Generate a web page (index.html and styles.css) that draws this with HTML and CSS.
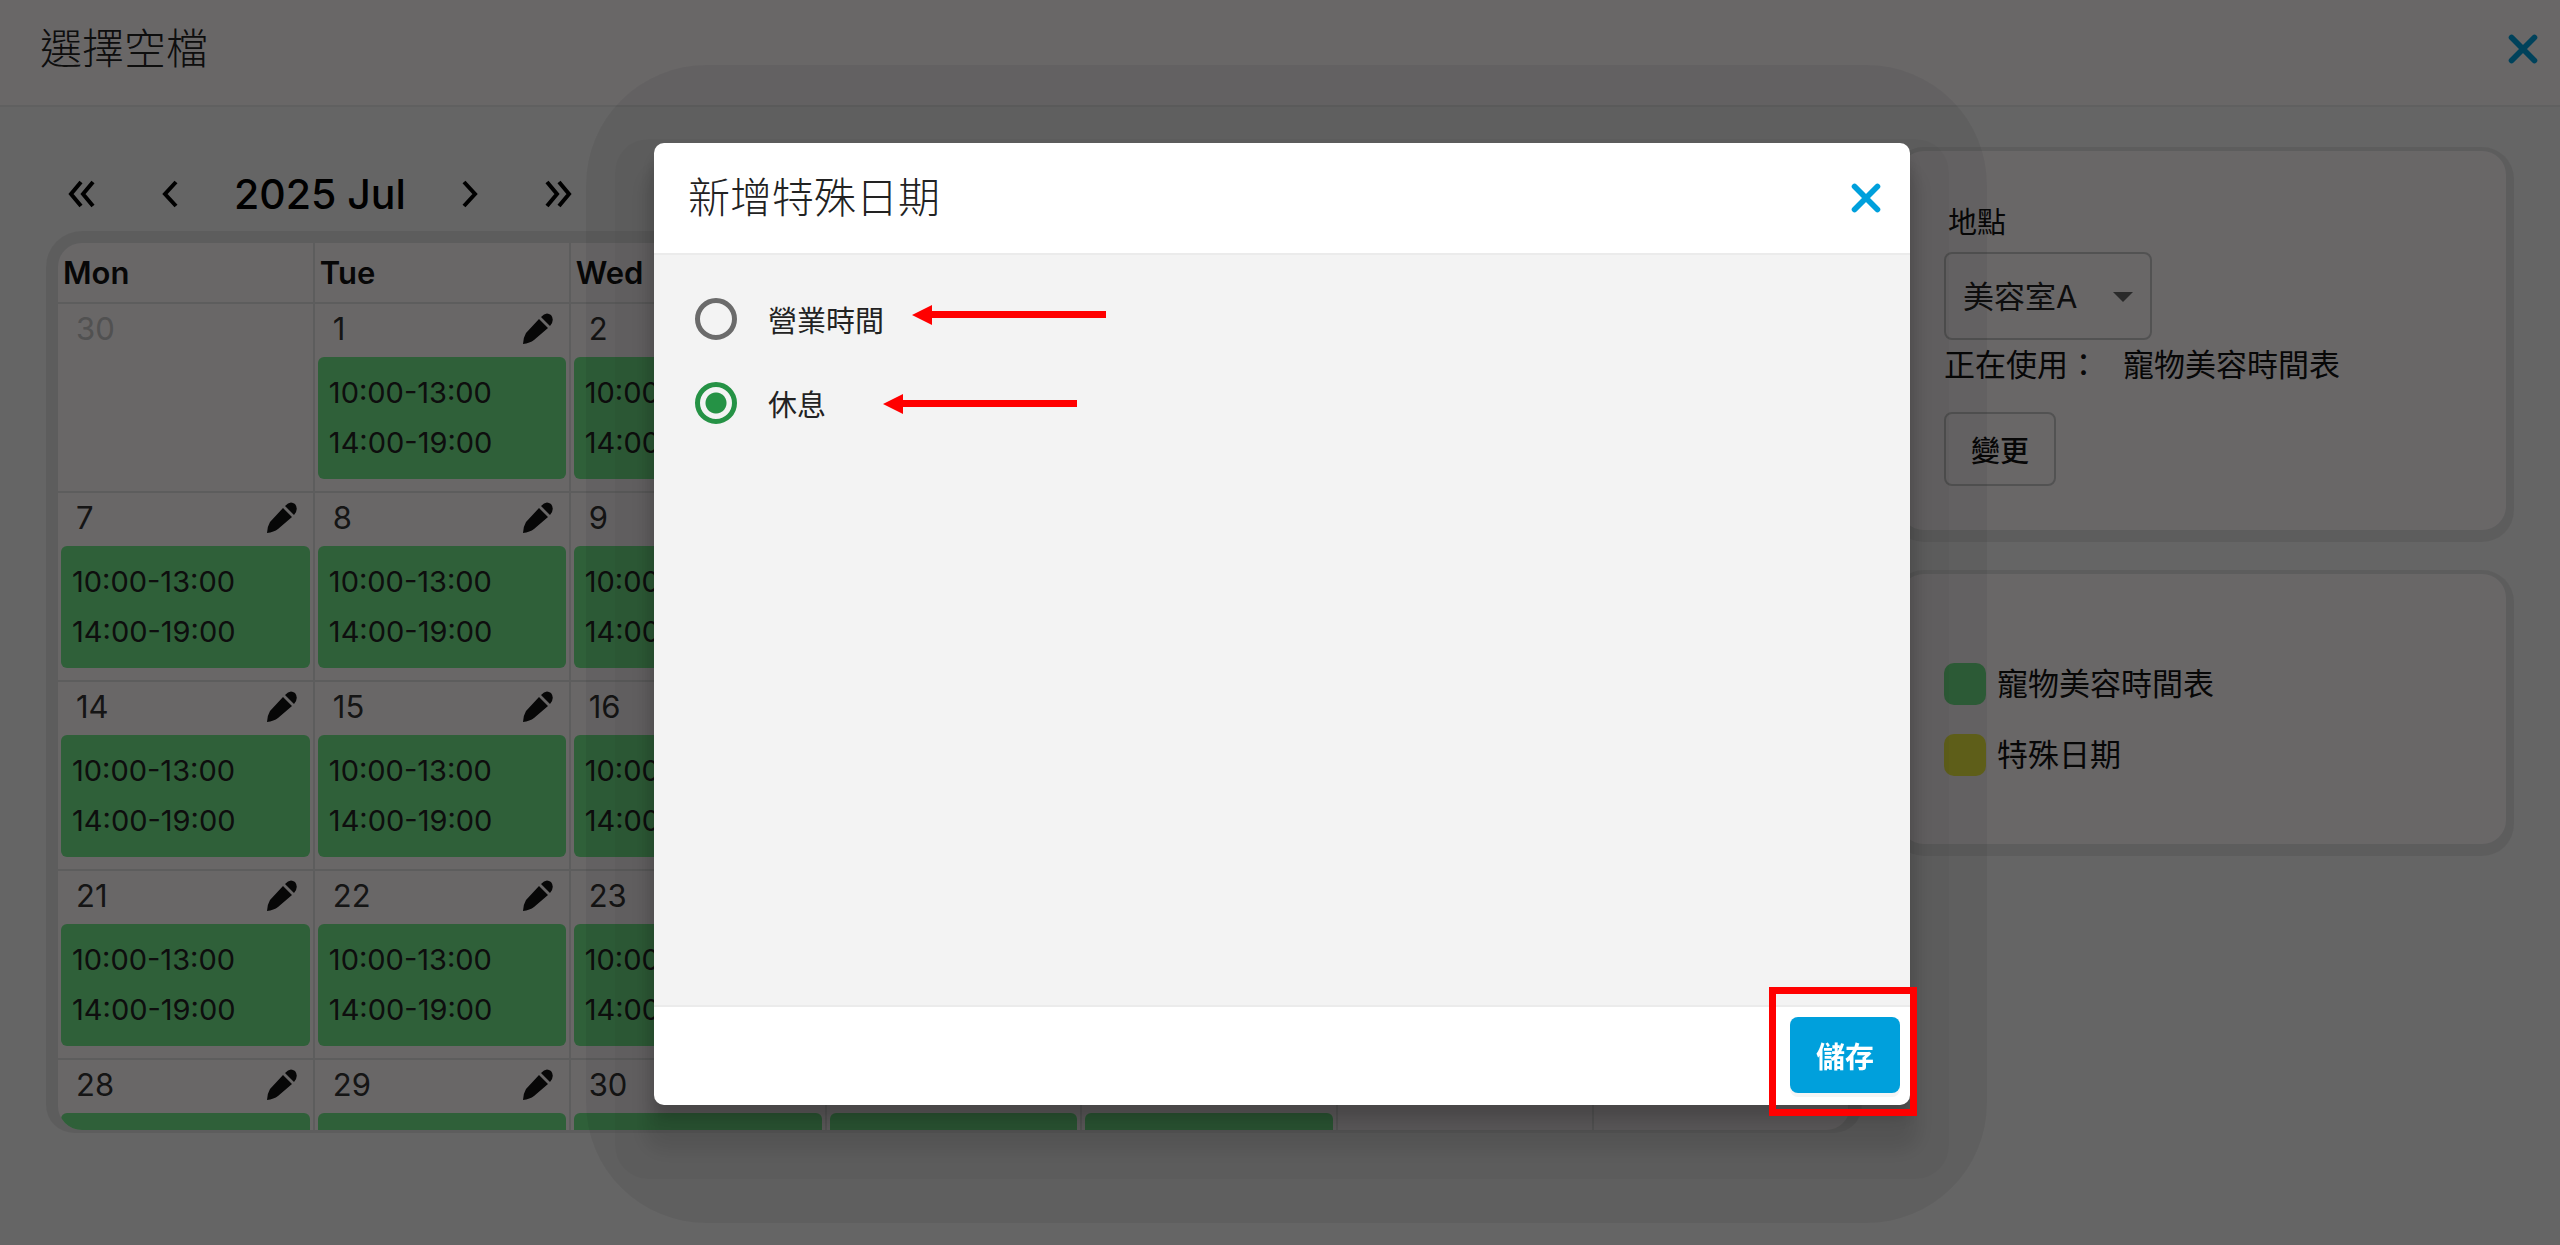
FILE: index.html
```html
<!DOCTYPE html>
<html lang="zh-Hant">
<head>
    <meta charset="UTF-8">
    <meta name="viewport" content="width=device-width, initial-scale=1.0">
    <title>選擇空檔</title>
    <link rel="stylesheet" href="styles.css">
</head>
<body>
    <div class="page">
        <header class="page-header">
            <h1 class="title">選擇空檔</h1>
            <button class="close" type="button" aria-label="關閉">
                <svg viewBox="0 0 28 28"><path d="M4 4L24 24M24 4L4 24"/></svg>
            </button>
        </header>

        <main class="content">
            <section class="calendar-side">
                <nav class="month-nav">
                    <button type="button" aria-label="上一年"><svg viewBox="0 0 28 28"><path d="M13 2L3 14L13 26M25 2L15 14L25 26"/></svg></button>
                    <button type="button" aria-label="上個月"><svg viewBox="0 0 28 28"><path d="M20 2L9 14L20 26"/></svg></button>
                    <h2 class="month">2025 Jul</h2>
                    <button type="button" aria-label="下個月"><svg viewBox="0 0 28 28"><path d="M8 2L19 14L8 26"/></svg></button>
                    <button type="button" aria-label="下一年"><svg viewBox="0 0 28 28"><path d="M3 2L13 14L3 26M15 2L25 14L15 26"/></svg></button>
                </nav>
                <div class="calendar-frame">
                    <div class="calendar">
                        <table>
                            <thead>
                                <tr><th>Mon</th><th>Tue</th><th>Wed</th><th>Thu</th><th>Fri</th><th>Sat</th><th>Sun</th></tr>
                            </thead>
                            <tbody id="days"></tbody>
                        </table>
                    </div>
                </div>
            </section>

            <aside class="panels">
                <section class="panel panel-location">
                    <label class="small-label" for="location">地點</label>
                    <div class="select-box">
                        <select id="location">
                            <option>美容室A</option>
                        </select>
                        <svg class="caret" viewBox="0 0 20 10"><path d="M0 0H20L10 10Z"/></svg>
                    </div>
                    <p class="in-use"><span>正在使用：</span><span>寵物美容時間表</span></p>
                    <button class="change" type="button">變更</button>
                </section>
                <section class="panel panel-legend">
                    <div class="legend"><span class="swatch green"></span>寵物美容時間表</div>
                    <div class="legend"><span class="swatch yellow"></span>特殊日期</div>
                </section>
            </aside>
        </main>
    </div>

    <div class="overlay">
        <form class="modal" role="dialog" aria-labelledby="modalTitle">
            <div class="modal-header">
                <h2 class="title" id="modalTitle">新增特殊日期</h2>
                <button class="close" type="button" aria-label="關閉">
                    <svg viewBox="0 0 28 28"><path d="M4 4L24 24M24 4L4 24"/></svg>
                </button>
            </div>
            <div class="modal-body">
                <label class="option"><input type="radio" name="dayType">營業時間</label>
                <label class="option"><input type="radio" name="dayType" checked>休息</label>
                <svg class="arrow arrow-hours" viewBox="0 0 194 20"><path d="M0 10L20 0V6H194V13H20V20Z"/></svg>
                <svg class="arrow arrow-rest" viewBox="0 0 194 20"><path d="M0 10L20 0V6H194V13H20V20Z"/></svg>
            </div>
            <div class="modal-footer">
                <div class="save-wrap">
                    <button class="save" type="button">儲存</button>
                    <span class="highlight"></span>
                </div>
            </div>
        </form>
    </div>

    <script src="script.js"></script>
</body>
</html>
```
FILE: script.js
```js
const body = document.getElementById('days');
const pencil = '<svg viewBox="0 0 32 32"><path d="M17 6L26 15L12 27Q8 30 1 31Q1 25 4 20ZM19 4Q24-2 29 2Q33 7 28 13Z"/></svg>';
const start = new Date(2025, 5, 30);

for (let week = 0; week < 5; week++) {
    const row = document.createElement('tr');

    for (let i = 0; i < 7; i++) {
        const date = new Date(start);
        date.setDate(start.getDate() + week * 7 + i);

        const cell = document.createElement('td');
        const past = date.getMonth() === 5;
        // the last week only shows the top of its slots
        const hours = week < 4 ? '10:00-13:00<br>14:00-19:00' : '';
        let html = '<div class="day' + (past ? ' muted' : '') + '"><span>' + date.getDate() + '</span>';

        if (!past && i < 5) {
            html += '<button type="button" aria-label="編輯">' + pencil + '</button></div>';
            html += '<div class="hours">' + hours + '</div>';
        } else {
            html += '</div>';
        }

        cell.innerHTML = html;
        row.appendChild(cell);
    }

    body.appendChild(row);
}
```
FILE: styles.css
```css
* {
    box-sizing: border-box;
}

body {
    margin: 0;
    font-family: Inter, "Noto Sans CJK TC", sans-serif;
    font-size: 31px;
    color: #111;
    background-color: #f4f4f4;
}

h1, h2, p {
    margin: 0;
}

button {
    font-family: inherit;
    padding: 0;
    border: none;
    background: none;
    cursor: pointer;
}

svg {
    display: block;
}

.title {
    font-size: 42px;
    font-weight: 300;
    line-height: 60px;
    color: #222;
}

.close svg {
    width: 32px;
    height: 32px;
    fill: none;
    stroke: #00a0dc;
    stroke-width: 5;
    stroke-linecap: round;
}

/* page */
.page {
    display: flex;
    flex-direction: column;
    height: 100vh;
    overflow: hidden;
}

.page-header {
    display: flex;
    justify-content: space-between;
    align-items: center;
    height: 107px;
    padding: 0 21px 8px 40px;
    background-color: #fff9fb;
    border-bottom: 2px solid #e8e8e8;
}

.content {
    flex: 1;
    display: flex;
    justify-content: space-between;
    min-height: 0;
    padding: 44px 54px 112px 46px;
}

.calendar-side {
    display: flex;
    flex-direction: column;
    width: 74%;
    max-width: 1816px;
}

.month-nav {
    display: flex;
    align-items: center;
    height: 80px;
    padding: 6px 0 0 22px;
}

.month-nav svg {
    width: 28px;
    height: 28px;
    fill: none;
    stroke: #000;
    stroke-width: 4;
}

.month-nav button + button {
    margin-left: 60px;
}

.month {
    margin: 0 50px;
    font-size: 41px;
    font-weight: 500;
    color: #000;
}

.month-nav .month + button {
    margin-left: 0;
}

.calendar-frame {
    flex: 1;
    min-height: 0;
    padding: 12px 12px 3px;
    border-radius: 36px 36px 28px 28px;
    background-color: #e3e3e3;
}

.calendar {
    height: 100%;
    overflow: hidden;
    border-radius: 24px;
    background-color: #fff9fb;
}

.calendar table {
    width: 100%;
    table-layout: fixed;
    border-collapse: collapse;
}

.calendar th {
    height: 60px;
    padding: 0 5px;
    font-size: 31px;
    font-weight: 600;
    text-align: left;
    border-right: 2px solid #e3e3e3;
}

.calendar td {
    height: 189px;
    padding: 0 3px;
    vertical-align: top;
    border-top: 2px solid #e3e3e3;
    border-right: 2px solid #e3e3e3;
}

.day {
    display: flex;
    justify-content: space-between;
    align-items: center;
    height: 49px;
    margin-bottom: 4px;
    padding: 0 12px 0 15px;
    color: #333;
}

.day.muted {
    color: #c4c4c4;
}

.day svg {
    width: 32px;
    height: 32px;
    fill: #111;
}

.hours {
    height: 122px;
    padding: 11px;
    font-size: 29px;
    line-height: 50px;
    color: #222;
    background-color: #73e88b;
    border-radius: 6px;
}

/* right side */
.panels {
    display: flex;
    flex-direction: column;
    gap: 44px;
    width: 25%;
    max-width: 606px;
}

.panel {
    padding-left: 44px;
    background-color: #fff9fb;
    border-radius: 24px;
    box-shadow: 0 4px 0 8px #e3e3e3;
}

.panel-location {
    padding-top: 51px;
    padding-bottom: 44px;
}

.small-label {
    display: block;
    padding-left: 4px;
    font-size: 29px;
    line-height: 42px;
    margin-bottom: 8px;
}

.select-box {
    position: relative;
    width: 208px;
}

.select-box select {
    appearance: none;
    width: 100%;
    height: 88px;
    padding: 0 17px;
    font-family: inherit;
    font-size: 31px;
    color: #222;
    background-color: transparent;
    border: 2px solid #c8c8c8;
    border-radius: 8px;
}

.caret {
    position: absolute;
    right: 19px;
    top: 40px;
    width: 20px;
    height: 10px;
    fill: #666;
}

.in-use {
    display: flex;
    gap: 24px;
    line-height: 50px;
    white-space: nowrap;
}

.change {
    width: 112px;
    height: 74px;
    margin-top: 22px;
    font-size: 29px;
    font-weight: 500;
    color: #111;
    border: 2px solid #c8c8c8;
    border-radius: 8px;
}

.panel-legend {
    display: flex;
    flex-direction: column;
    gap: 29px;
    padding-top: 89px;
    padding-bottom: 68px;
}

.legend {
    display: flex;
    align-items: center;
    gap: 11px;
    line-height: 42px;
}

.swatch {
    width: 42px;
    height: 42px;
    border-radius: 10px;
}

.green {
    background-color: #73e88b;
}

.yellow {
    background-color: #f1f142;
}

/* modal */
.overlay {
    position: fixed;
    inset: 0;
    display: flex;
    align-items: center;
    justify-content: center;
    padding: 2px 0 0 4px;
    background-color: rgba(0, 0, 0, 0.59);
}

.modal {
    position: relative;
    width: 1256px;
    max-width: 90vw;
    border-radius: 10px;
    box-shadow: 0 14px 16px 0 rgba(0, 0, 0, 0.18),
        0 36px 20px 10px rgba(0, 0, 0, 0.1),
        0 35px 0 39px rgba(0, 0, 0, 0.03);
}

/* widest ring of the shadow */
.modal::before {
    content: "";
    position: absolute;
    z-index: -1;
    inset: -78px -77px -118px -68px;
    border-radius: 120px;
    background-color: rgba(0, 0, 0, 0.06);
}

.modal-header {
    display: flex;
    justify-content: space-between;
    align-items: center;
    height: 112px;
    padding: 0 28px 0 34px;
    background-color: #fff;
    border-bottom: 2px solid #ebebeb;
    border-radius: 10px 10px 0 0;
}

.modal-body {
    position: relative;
    min-height: 750px;
    padding: 22px 41px;
    background-color: #f3f3f3;
}

.option {
    display: flex;
    align-items: center;
    gap: 31px;
    height: 84px;
    font-size: 29px;
    color: #222;
}

.option input {
    appearance: none;
    width: 42px;
    height: 42px;
    margin: 0;
    border: 5px solid #6b6b6b;
    border-radius: 50%;
}

.option input:checked {
    border-color: #259245;
    background: radial-gradient(circle, #259245 10px, transparent 11px);
}

.arrow {
    position: absolute;
    width: 194px;
    height: 20px;
    fill: #f00;
}

.arrow-hours {
    left: 258px;
    top: 50px;
}

.arrow-rest {
    left: 229px;
    top: 139px;
}

.modal-footer {
    display: flex;
    justify-content: flex-end;
    padding: 10px 10px 12px;
    background-color: #fff;
    border-top: 2px solid #ebebeb;
    border-radius: 0 0 10px 10px;
}

.save-wrap {
    position: relative;
}

.save {
    display: block;
    width: 110px;
    height: 76px;
    font-size: 29px;
    font-weight: 700;
    color: #fff;
    background-color: #00a0dc;
    border-radius: 8px;
    box-shadow: 0 4px 0 #f5f5f5;
}

.highlight {
    position: absolute;
    inset: -30px -17px -23px -21px;
    border: 7px solid #f00;
    pointer-events: none;
}
```
